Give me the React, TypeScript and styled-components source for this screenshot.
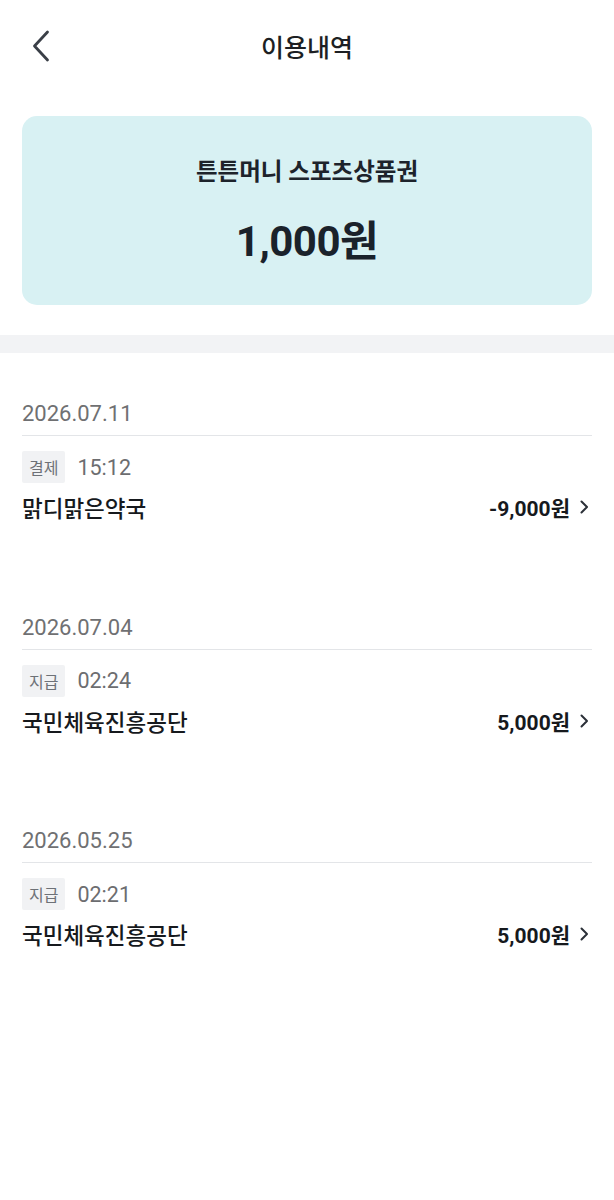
import React from "react";
import styled, { createGlobalStyle } from "styled-components";

const Global = createGlobalStyle`
  html, body { margin: 0; padding: 0; background: #ffffff; }
  body { font-family: Roboto, "Noto Sans CJK KR", sans-serif; -webkit-font-smoothing: antialiased; }
  * { box-sizing: border-box; }
`;

const Page = styled.div`
  width: 614px;
  min-height: 1200px;
  background: #ffffff;
  display: flex;
  flex-direction: column;
`;

const Header = styled.header`
  position: relative;
  height: 94px;
  display: flex;
  align-items: center;
  justify-content: center;
  padding-top: 3px;
`;

const BackButton = styled.button`
  position: absolute;
  left: 28px;
  top: 28px;
  width: 26px;
  height: 36px;
  border: 0;
  padding: 0;
  background: transparent;
  display: flex;
  align-items: center;
  justify-content: center;
`;

const Title = styled.h1`
  margin: 0;
  font-size: 25px;
  font-weight: 500;
  line-height: 32px;
  color: #1d1f23;
`;

const Card = styled.section`
  margin: 22px 22px 0;
  height: 189px;
  border-radius: 15px;
  background: #d8f1f3;
  display: flex;
  flex-direction: column;
  align-items: center;
  padding-top: 40px;
`;

const CardTitle = styled.div`
  font-size: 23.5px;
  font-weight: 700;
  color: #1d232b;
  line-height: 32px;
`;

const CardAmount = styled.div`
  margin-top: 30px;
  font-size: 42px;
  font-weight: 700;
  color: #1a222b;
  line-height: 48px;
  letter-spacing: -0.5px;
`;

const Band = styled.div`
  margin-top: 30px;
  height: 18px;
  background: #f2f3f5;
`;

const List = styled.div`
  padding: 49px 22px 0;
  display: flex;
  flex-direction: column;
  gap: 94.5px;
`;

const Group = styled.div`
  display: flex;
  flex-direction: column;
`;

const DateLabel = styled.div`
  font-size: 22px;
  line-height: 24px;
  color: #6f7072;
  padding-bottom: 9px;
  border-bottom: 1px solid #e3e5e8;
`;

const MetaRow = styled.div`
  margin-top: 15px;
  display: flex;
  align-items: center;
  gap: 12px;
`;

const Badge = styled.span`
  height: 32px;
  padding: 0 7px;
  display: inline-flex;
  align-items: center;
  background: #f1f2f4;
  color: #6d7177;
  font-size: 16px;
  border-radius: 2px;
`;

const Time = styled.span`
  font-size: 21.5px;
  color: #6c6d70;
`;

const ItemRow = styled.div`
  margin-top: 10px;
  display: flex;
  align-items: center;
  justify-content: space-between;
  height: 28px;
`;

const Merchant = styled.span`
  font-size: 22.5px;
  font-weight: 500;
  color: #16191d;
`;

const AmountWrap = styled.span`
  display: flex;
  align-items: center;
  gap: 10px;
  padding-right: 3px;
`;

const Amount = styled.span`
  font-size: 21px;
  font-weight: 700;
  color: #16191d;
`;

const BackIcon = () => (
  <svg width="18" height="32" viewBox="0 0 18 32" fill="none">
    <path d="M15.5 2 L2.5 16 L15.5 30" stroke="#3a3f47" strokeWidth="2.8" strokeLinecap="round" strokeLinejoin="round" />
  </svg>
);

const Chevron = () => (
  <svg width="9" height="14" viewBox="0 0 9 14" fill="none">
    <path d="M1.5 1.5 L7 7 L1.5 12.5" stroke="#2b3038" strokeWidth="2" strokeLinecap="round" strokeLinejoin="round" />
  </svg>
);

type Tx = { date: string; kind: string; time: string; name: string; amount: string };

const txs: Tx[] = [
  { date: "2026.07.11", kind: "결제", time: "15:12", name: "맑디맑은약국", amount: "-9,000원" },
  { date: "2026.07.04", kind: "지급", time: "02:24", name: "국민체육진흥공단", amount: "5,000원" },
  { date: "2026.05.25", kind: "지급", time: "02:21", name: "국민체육진흥공단", amount: "5,000원" },
];

export default function App() {
  return (
    <Page>
      <Global />
      <Header>
        <BackButton aria-label="뒤로">
          <BackIcon />
        </BackButton>
        <Title>이용내역</Title>
      </Header>
      <Card>
        <CardTitle>튼튼머니 스포츠상품권</CardTitle>
        <CardAmount>1,000원</CardAmount>
      </Card>
      <Band />
      <List>
        {txs.map((t, i) => (
          <Group key={i}>
            <DateLabel>{t.date}</DateLabel>
            <MetaRow>
              <Badge>{t.kind}</Badge>
              <Time>{t.time}</Time>
            </MetaRow>
            <ItemRow>
              <Merchant>{t.name}</Merchant>
              <AmountWrap>
                <Amount>{t.amount}</Amount>
                <Chevron />
              </AmountWrap>
            </ItemRow>
          </Group>
        ))}
      </List>
    </Page>
  );
}
